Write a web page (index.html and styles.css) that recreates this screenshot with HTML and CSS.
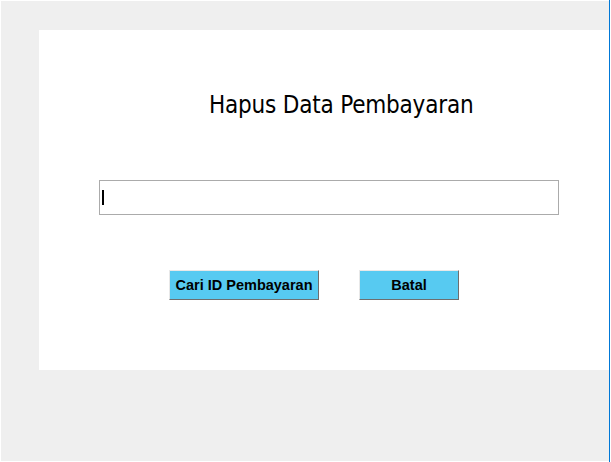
FILE: index.html
```html
<!DOCTYPE html>
<html>
<head>
<meta charset="utf-8">
<link rel="stylesheet" href="styles.css">
</head>
<body>
<div class="screen">
  <div class="frame">
    <div class="panel">
      <h1 class="title">Hapus Data Pembayaran</h1>
      <div class="field"><span class="caret"></span></div>
      <div class="actions">
        <button class="btn btn-wide">Cari ID Pembayaran</button>
        <button class="btn btn-narrow">Batal</button>
      </div>
    </div>
  </div>
  <div class="edge"></div>
</div>
</body>
</html>
```
FILE: styles.css
```css
html, body {
  margin: 0;
  padding: 0;
  background: #ffffff;
}
.screen {
  display: flex;
  width: 611px;
  height: 462px;
}
.frame {
  margin: 1px 0 1px 1px;
  width: 608px;
  height: 460px;
  background: #efefef;
  padding: 29px 0 0 38px;
  box-sizing: border-box;
}
.edge {
  width: 1px;
  height: 462px;
  background: #0078d7;
}
.panel {
  background: #ffffff;
  width: 570px;
  height: 340px;
  display: flex;
  flex-direction: column;
  align-items: flex-start;
}
.title {
  margin: 60px 0 0 170px;
  font-family: "DejaVu Sans Condensed", "DejaVu Sans", sans-serif;
  font-weight: normal;
  font-size: 24px;
  letter-spacing: -0.2px;
  line-height: 30px;
  color: #000;
}
.field {
  margin: 60px 0 0 60px;
  width: 460px;
  height: 35px;
  box-sizing: border-box;
  border: 1px solid #ababab;
  display: flex;
  align-items: center;
  padding-left: 2px;
}
.caret {
  width: 1.5px;
  height: 15px;
  background: #000;
}
.actions {
  margin: 55px 0 0 130px;
  display: flex;
  gap: 40px;
}
.btn {
  height: 30px;
  margin: 0;
  padding: 0;
  box-sizing: border-box;
  background: #57caf1;
  border-style: solid;
  border-width: 1px;
  border-color: #e8e8e8 #6e6e6e #6e6e6e #e8e8e8;
  font-family: "Liberation Sans", Arial, sans-serif;
  font-weight: bold;
  font-size: 14.5px;
  color: #000;
}
.btn-wide { width: 150px; }
.btn-narrow { width: 100px; }
```
